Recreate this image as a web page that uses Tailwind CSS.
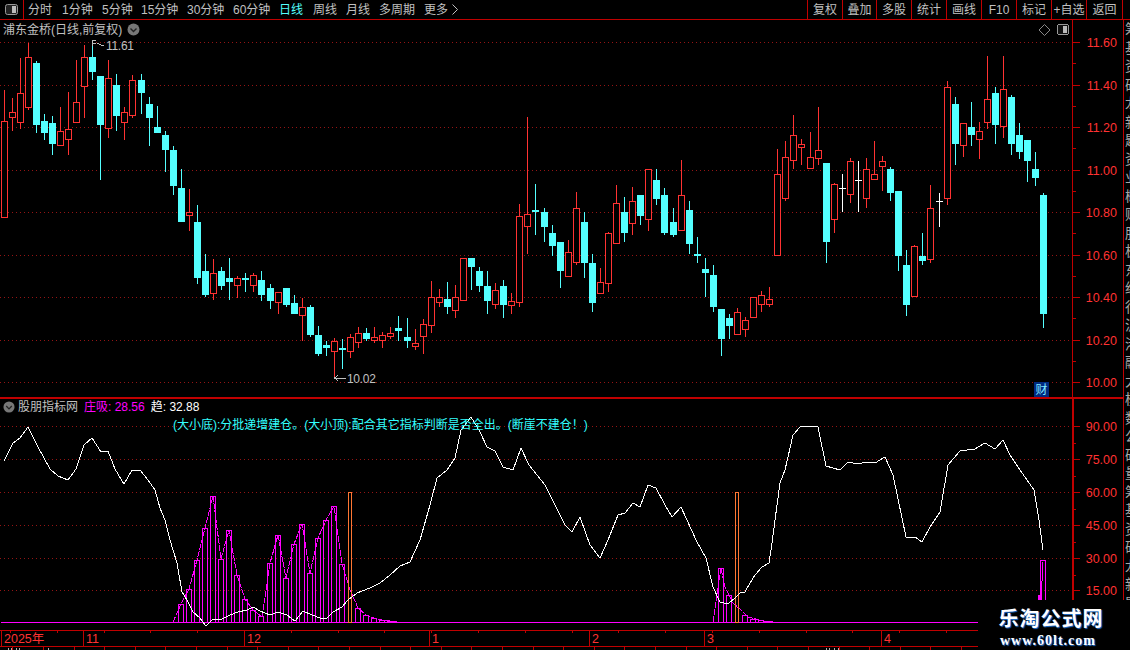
<!DOCTYPE html>
<html lang="zh-CN">

<head>
  <meta charset="UTF-8">
  <title>浦东金桥 日线</title>
  <script src="https://cdn.jsdelivr.net/npm/@tailwindcss/browser@4"></script>
</head>

<body class="bg-black">
  <div class="relative w-[1130px] h-[650px] overflow-hidden bg-black text-[12px] leading-none text-[#c0c0c0] font-['Liberation_Sans','Noto_Sans_CJK_SC',sans-serif]">

    <!-- Toolbar -->
    <nav class="flex h-[20px] border-b border-[#c00000]">
      <div class="flex items-center justify-center w-[24px] border-r border-[#c00000]">
        <svg width="13" height="11" viewBox="0 0 13 11"><rect x="0.5" y="0.5" width="12" height="10" rx="2" fill="#222" stroke="#999"/><rect x="7" y="2" width="4" height="7" fill="#bbb"/></svg>
      </div>
      <div class="flex items-center gap-[10px] pl-[4px] flex-1 whitespace-nowrap">
        <span class="w-[24px]">分时</span><span class="w-[30px]">1分钟</span><span class="w-[29px]">5分钟</span><span class="w-[36px]">15分钟</span><span class="w-[36px]">30分钟</span><span class="w-[36px]">60分钟</span>
        <span class="w-[24px] text-[#54ffff]">日线</span><span class="w-[24px]">周线</span><span class="w-[24px] -ml-px">月线</span><span class="w-[36px] -ml-px">多周期</span><span class="flex items-center gap-[4px] -ml-px">更多<svg width="6" height="11" viewBox="0 0 6 11"><path d="M0.500 0.500 5.500 5.500 0.500 10.500" fill="none" stroke="#c0c0c0"/></svg></span>
      </div>
      <div class="flex w-[323px] items-stretch">
        <span class="flex items-center justify-center w-[35px] border-l border-[#c00000]">复权</span>
        <span class="flex items-center justify-center w-[34px] border-l border-[#c00000]">叠加</span>
        <span class="flex items-center justify-center w-[35px] border-l border-[#c00000]">多股</span>
        <span class="flex items-center justify-center w-[35px] border-l border-[#c00000]">统计</span>
        <span class="flex items-center justify-center w-[35px] border-l border-[#c00000]">画线</span>
        <span class="flex items-center justify-center w-[35px] border-l border-[#c00000]">F10</span>
        <span class="flex items-center justify-center w-[35px] border-l border-[#c00000]">标记</span>
        <span class="flex items-center justify-center w-[35px] border-l border-[#c00000]">+自选</span>
        <span class="flex items-center justify-center w-[37px] border-l border-r border-[#c00000]">返回</span>
      </div>
    </nav>

    <div class="flex h-[630px]">
      <div class="relative w-[1123px] flex flex-col">
        <!-- Price chart -->
        <svg id="price" class="block" width="1123" height="377" viewBox="0 20 1123 377" shape-rendering="crispEdges"></svg>
        <!-- Indicator chart -->
        <svg id="indicator" class="block" width="1123" height="253" viewBox="0 397 1123 253" shape-rendering="crispEdges"></svg>

        <!-- Chart legends -->
        <div class="absolute left-[3px] top-[2px] flex items-center gap-[5px] h-[15px]">
          <span>浦东金桥(日线,前复权)</span>
          <svg width="13" height="13" viewBox="0 0 13 13"><circle cx="6.5" cy="6.5" r="6" fill="#777"/><path d="M3.5 5.5 6.5 8.5 9.5 5.5" fill="none" stroke="#222" stroke-width="1.4"/></svg>
        </div>
        <div class="absolute left-[3px] top-[379px] flex items-center h-[15px]">
          <svg width="12" height="12" viewBox="0 0 13 13"><circle cx="6.5" cy="6.5" r="6" fill="#777"/><path d="M3.5 5.5 6.5 8.5 9.5 5.5" fill="none" stroke="#222" stroke-width="1.4"/></svg>
          <span class="ml-[3px]">股朋指标网</span>
          <span class="ml-[6px] text-[#ff00ff]">庄吸: 28.56</span>
          <span class="ml-[6px] text-white">趋: 32.88</span>
        </div>
        <div class="absolute left-[173px] top-[399px] whitespace-nowrap text-[#33ffff]">(大小底):分批递增建仓。(大小顶):配合其它指标判断是否全出。(断崖不建仓！)</div>
      </div>

      <!-- Cut-off side panel -->
      <div class="w-[7px] overflow-hidden border-l border-[#c00000] text-[#a8a8a8] text-[14px] leading-[18.5px] pl-[1px] whitespace-nowrap">
        <div>筹</div><div>基</div><div>资</div><div>研</div><div>龙</div><div>新</div><div>题</div><div>资</div><div>业</div><div>概</div><div>财</div><div>股</div><div>板</div><div>东</div><div>经</div><div>行</div><div>沪</div><div>港</div><div>融</div><div>大</div><div>模</div><div>数</div><div>公</div><div>研</div><div>量</div><div>筹</div><div>基</div><div>资</div><div>研</div><div>龙</div><div>新</div><div>题</div><div>业</div><div>概</div>
      </div>
    </div>

    <!-- Watermark -->
    <div class="absolute left-[978px] top-[600px] w-[152px] h-[50px] bg-black flex flex-col items-center pt-[9px] pr-[6px]">
      <div class="text-[20px] font-bold text-white tracking-[1px] [text-shadow:1px_1px_1px_#1e6fd0]">乐淘公式网</div>
      <div class="mt-[5px] pr-[6px] text-[14px] font-bold text-white tracking-[1px] font-['Liberation_Serif',serif] [text-shadow:1px_1px_1px_#1e6fd0]">www.60lt.com</div>
    </div>
  </div>

  <script>
    const RED = "#ff3232", CYAN = "#54ffff", AXIS = "#c00000", GRID = "#941414";

    // x, body top, body bottom, high, low, kind
    const candles = [
      [4,121,217,90,217,"r"],[12,112,117,98,131,"r"],[20,93,122,58,129,"r"],[28,57,107,43,110,"r"],[36,63,125,61,133,"c"],
      [44,121,133,114,140,"c"],[52,123,144,116,155,"c"],[60,131,145,107,146,"r"],[68,129,139,92,155,"r"],[76,102,122,60,122,"r"],
      [84,57,86,45,118,"r"],[92,57,72,40,80,"c"],[100,76,125,76,180,"c"],[108,78,128,60,138,"r"],[116,85,116,74,131,"c"],
      [124,112,122,107,140,"r"],[132,80,115,75,118,"r"],[141,80,93,74,114,"c"],[149,104,118,97,146,"c"],[157,127,133,106,133,"c"],
      [165,135,150,131,172,"c"],[173,150,186,146,195,"c"],[181,188,222,169,222,"c"],[189,212,215,189,231,"r"],[197,222,278,205,284,"c"],
      [205,271,295,254,297,"c"],[213,273,293,259,300,"r"],[221,271,286,267,290,"c"],[229,278,282,258,300,"c"],[237,278,285,276,298,"r"],
      [245,278,280,273,292,"c"],[253,275,285,273,292,"r"],[261,280,295,271,301,"c"],[270,288,301,284,309,"c"],[278,292,302,292,314,"r"],
      [286,288,305,288,307,"c"],[294,303,314,295,314,"c"],[302,307,315,298,341,"r"],[310,307,335,305,337,"c"],[318,335,354,326,356,"c"],
      [326,345,348,341,356,"c"],[334,341,351,338,379,"r"],[342,348,350,339,369,"c"],[350,337,351,334,358,"r"],[358,333,342,327,348,"r"],
      [366,333,339,328,341,"c"],[374,337,340,327,343,"r"],[382,335,340,332,348,"r"],[390,333,336,327,339,"r"],[398,328,331,316,341,"c"],
      [407,337,341,318,348,"c"],[415,343,346,329,350,"r"],[423,324,336,319,354,"r"],[431,297,325,281,333,"r"],[439,297,302,289,307,"r"],
      [447,299,307,282,314,"c"],[455,297,310,285,318,"r"],[463,258,300,258,301,"r"],[471,258,267,258,290,"c"],[479,271,286,267,292,"c"],
      [487,286,301,271,314,"c"],[495,290,304,283,309,"r"],[503,286,305,280,318,"c"],[511,301,305,293,314,"r"],[519,216,302,204,307,"r"],
      [527,214,226,117,254,"r"],[535,210,212,184,235,"c"],[544,212,227,208,242,"c"],[552,233,246,225,256,"c"],[560,242,271,242,288,"c"],
      [568,252,276,240,276,"r"],[576,208,262,192,265,"r"],[584,222,263,212,278,"c"],[592,263,303,254,312,"c"],[600,282,293,268,293,"r"],
      [608,233,283,232,292,"r"],[616,203,243,185,243,"r"],[624,212,233,197,242,"c"],[632,201,223,187,235,"r"],[640,195,216,195,225,"c"],
      [648,169,219,169,231,"r"],[656,180,199,169,205,"c"],[664,195,233,188,235,"c"],[673,222,235,208,237,"c"],[681,195,230,160,230,"r"],
      [689,210,244,201,254,"c"],[697,254,256,237,263,"c"],[705,269,273,258,297,"c"],[713,275,307,265,312,"c"],[721,309,339,309,356,"c"],
      [729,318,326,314,339,"c"],[737,312,334,308,334,"r"],[745,320,329,317,337,"r"],[753,297,317,297,318,"r"],[761,295,304,291,312,"r"],
      [769,299,304,287,307,"r"],[777,174,255,149,255,"r"],[785,157,198,141,201,"r"],[793,135,160,115,169,"r"],[801,144,147,139,165,"r"],
      [810,157,168,132,168,"r"],[818,150,158,107,165,"r"],[826,163,242,163,263,"c"],[834,184,219,183,233,"r"],[842,188,189,174,212,"w"],
      [850,161,194,158,203,"r"],[858,180,181,161,212,"w"],[866,169,198,158,208,"r"],[874,174,179,141,180,"r"],[882,161,166,156,191,"r"],
      [890,169,193,167,201,"c"],[898,191,256,191,271,"c"],[906,265,305,250,316,"c"],[914,246,296,245,297,"r"],[922,256,261,233,265,"c"],
      [930,208,259,185,263,"r"],[939,201,202,193,227,"w"],[947,87,198,81,205,"r"],[955,104,144,97,165,"c"],[963,123,145,123,157,"r"],
      [971,127,135,102,146,"c"],[979,131,139,122,159,"r"],[987,99,122,56,129,"r"],[995,93,125,87,144,"c"],[1003,89,126,56,138,"r"],
      [1011,97,144,95,155,"c"],[1019,135,152,123,159,"c"],[1027,140,161,140,182,"c"],[1035,169,178,152,186,"c"],[1043,195,314,193,328,"c"]
    ];

    // white line of the indicator pane
    const trend = "4,461 13,443 20,438 28,427 38,447 50,469 58,476 68,480 76,469 84,445 92,438 101,452 108,451 115,469 124,484 132,470 140,470 148,480 155,490 160,508 165,520 170,540 177,563 182,592 187,600 193,612 200,618 206,626 213,619 222,619 230,615 238,612 247,610 253,607 260,611 270,615 278,612 287,615 295,621 303,611 312,615 320,618 327,618 333,612 342,607 348,600 357,593 370,588 380,583 390,575 400,566 410,562 420,540 430,505 437,478 447,470 455,458 461,430 471,417 480,432 487,447 495,451 503,467 513,470 521,448 529,465 533,470 545,485 555,505 565,525 572,532 580,517 590,545 600,558 608,540 618,515 625,513 633,503 640,507 648,485 656,488 665,505 672,517 681,507 697,542 706,558 713,587 720,602 728,604 735,598 740,593 745,592 750,583 755,575 762,567 769,563 772,543 775,520 780,483 785,470 793,435 800,427 810,426 818,427 826,466 840,470 848,462 858,464 866,462 875,463 885,457 893,475 906,537 915,537 922,542 930,527 940,512 948,465 960,451 975,449 985,443 995,449 1003,440 1010,455 1020,470 1034,490 1039,520 1043,550";

    // x, top of each magenta bar, up to the baseline
    const bars = [
      [181,604],[189,589],[197,560],[205,528],[213,496],[221,559],[229,530],[237,575],[245,599],[253,610],[261,616],
      [270,563],[278,535],[286,578],[294,544],[302,524],[310,573],[318,538],[326,520],[334,506],[342,564],
      [358,608],[366,615],[374,618],[382,620],[390,621],[398,622],
      [721,568],[729,595],[745,615],[753,619],[761,620],[769,621]
    ];
    const signals = [[350,492],[737,492]];

    function line(x1, y1, x2, y2, color, extra) {
      return `<line x1="${x1}" y1="${y1}" x2="${x2}" y2="${y2}" stroke="${color}" ${extra || ""}/>`;
    }

    function label(x, y, text) {
      return `<text x="${x}" y="${y}" fill="${RED}" font-size="12.5" text-anchor="end" shape-rendering="auto">${text}</text>`;
    }

    function drawPrice() {
      let s = "";
      const prices = ["11.60","11.40","11.20","11.00","10.80","10.60","10.40","10.20","10.00"];
      prices.forEach((p, i) => {
        const y = Math.floor(42.5 * (i + 1)) + 0.5;
        s += line(0, y, 1072, y, GRID, 'stroke-dasharray="1 3"');
        s += line(1072, y, 1080, y, AXIS);
        if (i < 8) s += line(1072, y + 21, 1076, y + 21, AXIS);
        s += label(1117, y + 4.5, p);
      });
      s += line(1072.5, 20, 1072.5, 397, AXIS);

      candles.forEach(([x, top, bot, hi, lo, kind]) => {
        const cx = x + 0.5;
        if (kind === "r") {
          if (hi < top) s += line(cx, hi, cx, top, RED);
          if (lo > bot) s += line(cx, bot, cx, lo, RED);
          s += `<rect x="${x - 2.5}" y="${top + 0.5}" width="6" height="${bot - top}" fill="#000" stroke="${RED}"/>`;
        } else {
          const color = kind === "w" ? "#fff" : CYAN;
          s += line(cx, hi, cx, lo, color);
          s += `<rect x="${x - 3}" y="${top}" width="7" height="${Math.max(bot - top, 1)}" fill="${color}"/>`;
        }
      });

      // high and low marks
      s += `<path d="M92.5 46V40.5H96M93 43.5H96M97 43l3 1.5 4 1.5" fill="none" stroke="#c0c0c0"/>`;
      s += `<text x="106" y="50" fill="#c0c0c0" font-size="12" letter-spacing="-0.3" shape-rendering="auto">11.61</text>`;
      s += `<path d="M346 378H335M338 375.500 334.500 378 338 380.500" fill="none" stroke="#c0c0c0"/>`;
      s += `<text x="347" y="383" fill="#c0c0c0" font-size="12" letter-spacing="-0.3" shape-rendering="auto">10.02</text>`;

      // top right icons and the badge
      s += `<path d="M1044.500 24.500 1050 30 1044.500 35.500 1039 30Z" fill="none" stroke="#888" shape-rendering="auto"/>`;
      s += `<rect x="1057.500" y="24.500" width="11" height="10" rx="2" fill="#111" stroke="#999"/><rect x="1063" y="26" width="4" height="7" fill="#bbb"/>`;
      s += `<rect x="1034" y="382" width="15" height="15" fill="#002a80"/>`;
      s += `<text x="1041.500" y="394" fill="#7fe8ff" font-size="12" text-anchor="middle" shape-rendering="auto">财</text>`;

      document.getElementById("price").innerHTML = s;
    }

    function drawIndicator() {
      let s = "";
      s += `<rect x="0" y="397" width="1123" height="2" fill="${AXIS}"/>`;
      const levels = [[426,"90.00"],[459,"75.00"],[492,"60.00"],[525,"45.00"],[558,"30.00"],[590,"15.00"]];
      levels.forEach(([y, text]) => {
        s += line(0, y + 0.5, 1072, y + 0.5, GRID, 'stroke-dasharray="1 3"');
        s += line(1072, y + 0.5, 1080, y + 0.5, AXIS);
        s += line(1072, y + 17, 1076, y + 17, AXIS);
        s += label(1117, y + 5, text);
      });
      s += `<rect x="1072" y="399" width="2" height="210" fill="${AXIS}"/>`;

      // baseline, bars and their line
      s += `<rect x="1" y="622" width="977" height="1" fill="#ff00ff"/>`;
      bars.forEach(([x, top]) => {
        s += `<rect x="${x - 2.5}" y="${top + 0.5}" width="5" height="${622 - top}" fill="none" stroke="#ff00ff"/>`;
      });
      s += `<rect x="1040.500" y="560.500" width="5" height="50" fill="none" stroke="#ff00ff"/>`;
      s += `<rect x="1038" y="595" width="2" height="10" fill="#ff00ff"/>`;
      s += `<polyline points="1041,600 1043,562" fill="none" stroke="#ff00ff"/>`;
      const wave = "173,622 181,604 189,589 197,560 205,528 213,496 221,559 229,530 237,575 245,599 253,610 262,617 270,563 278,535 286,578 294,544 302,524 310,573 318,538 326,520 334,506 342,564 350,590 358,608 366,615 374,618 382,620 398,622";
      s += `<polyline points="${wave}" fill="none" stroke="#ff00ff" stroke-dasharray="6 1"/>`;
      s += `<polyline points="713,622 721,568 725,587 733,603 740,609 748,617 763,621 773,622" fill="none" stroke="#ff00ff" stroke-dasharray="6 1"/>`;
      signals.forEach(([x, top]) => {
        s += `<rect x="${x - 1.5}" y="${top + 0.5}" width="3" height="${622 - top}" fill="none" stroke="#ff7733"/>`;
      });
      s += `<polyline points="${trend}" fill="none" stroke="#ffffff"/>`;

      // time axis
      s += line(0, 630.5, 978, 630.5, AXIS);
      s += line(0, 646.5, 978, 646.5, AXIS);
      for (let x = 10; x < 978; x += 46.8) s += line(Math.round(x) + 0.5, 630, Math.round(x) + 0.5, 633, AXIS);
      for (let x = 12.4; x < 978; x += 30.6) s += line(Math.round(x) + 0.5, 647, Math.round(x) + 0.5, 650, AXIS);
      const months = [[1,"2025年"],[83,"11"],[244,"12"],[429,"1"],[589,"2"],[704,"3"],[881,"4"]];
      months.forEach(([x, text]) => {
        s += line(x + 0.5, 631, x + 0.5, 646, AXIS);
        s += `<text x="${x + 3}" y="643" fill="${RED}" font-size="12.500" shape-rendering="auto">${text}</text>`;
      });

      // tops of the status row, cut off by the window edge
      [8,11,16,19,48,826,829,834,838].forEach((x) => {
        s += line(x + 0.5, 648, x + 0.5, 650, "#b0b0b0");
      });
      document.getElementById("indicator").innerHTML = s;
    }

    drawPrice();
    drawIndicator();
  </script>
</body>

</html>
